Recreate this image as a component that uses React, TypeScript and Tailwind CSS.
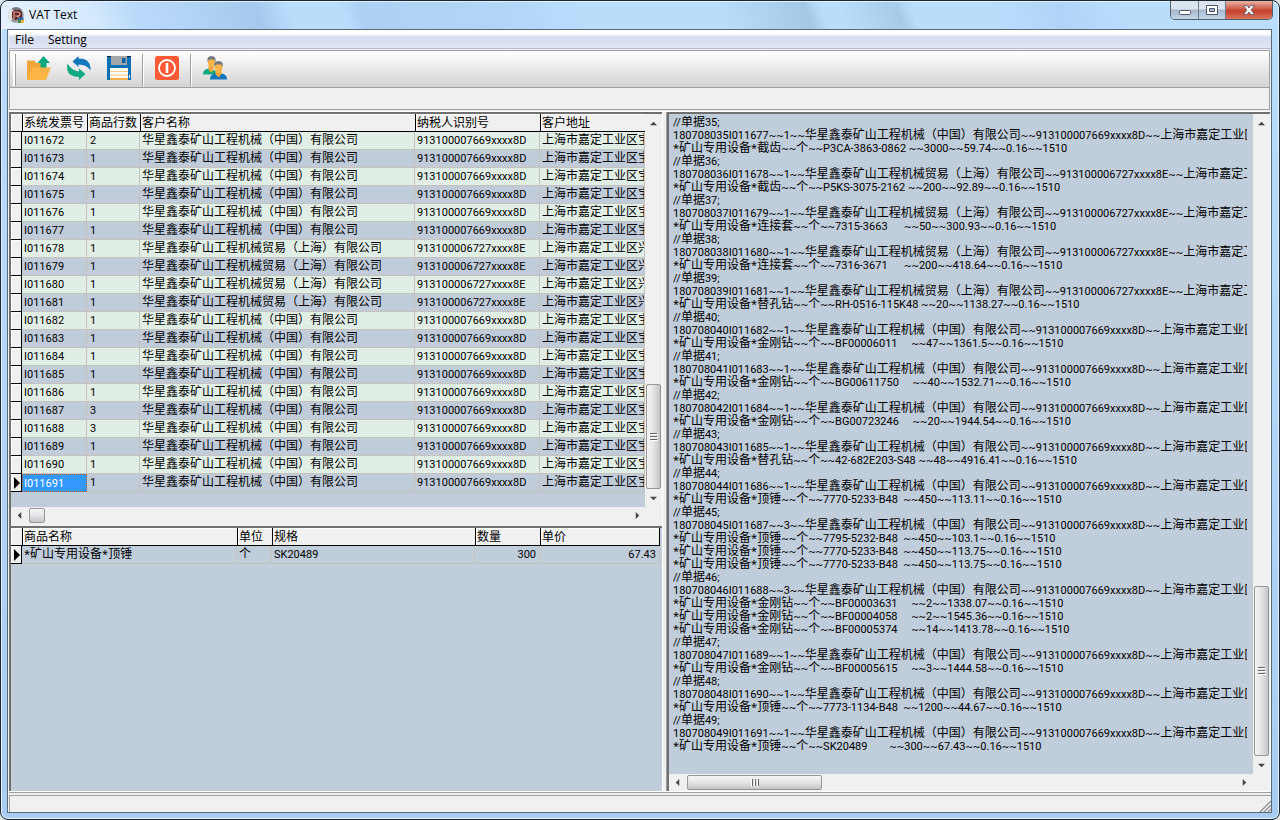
import type { ReactNode } from 'react';

const TOKENS = /([\u2e80-\u9fff\uff00-\uffef\u3000-\u303f]+|\*)/;

function Mixed({ children }: { children: string }) {
  return (
    <>
      {children.split(TOKENS).map((part, i) =>
        i % 2 ? (
          <span key={i} className={part === '*' ? "leading-none font-['Noto_Sans',sans-serif]" : 'text-[12px] leading-none'}>{part}</span>
        ) : (
          part
        ),
      )}
    </>
  );
}

const CN = { name: '华星鑫泰矿山工程机械（中国）有限公司', tax: '913100007669xxxx8D', addr: '上海市嘉定工业区宝' };
const SH = { name: '华星鑫泰矿山工程机械贸易（上海）有限公司', tax: '913100006727xxxx8E', addr: '上海市嘉定工业区兴' };

const invoices = Array.from({ length: 20 }, (_, i) => {
  const no = 11672 + i;
  const lines = no === 11672 ? 2 : no === 11687 || no === 11688 ? 3 : 1;
  return { id: `I0${no}`, lines, customer: no >= 11678 && no <= 11681 ? SH : CN };
});

const items: string[][] = [
  ['截齿~~个~~P3CA-3863-0862 ~~3000~~59.74'],
  ['截齿~~个~~P5KS-3075-2162 ~~200~~92.89'],
  ['连接套~~个~~7315-3663      ~~50~~300.93'],
  ['连接套~~个~~7316-3671      ~~200~~418.64'],
  ['替孔钻~~个~~RH-0516-115K48 ~~20~~1138.27'],
  ['金刚钻~~个~~BF00006011     ~~47~~1361.5'],
  ['金刚钻~~个~~BG00611750     ~~40~~1532.71'],
  ['金刚钻~~个~~BG00723246     ~~20~~1944.54'],
  ['替孔钻~~个~~42-682E203-S48 ~~48~~4916.41'],
  ['顶锤~~个~~7770-5233-B48  ~~450~~113.11'],
  ['顶锤~~个~~7795-5232-B48  ~~450~~103.1', '顶锤~~个~~7770-5233-B48  ~~450~~113.75', '顶锤~~个~~7770-5233-B48  ~~450~~113.75'],
  ['金刚钻~~个~~BF00003631     ~~2~~1338.07', '金刚钻~~个~~BF00004058     ~~2~~1545.36', '金刚钻~~个~~BF00005374     ~~14~~1413.78'],
  ['金刚钻~~个~~BF00005615     ~~3~~1444.58'],
  ['顶锤~~个~~7773-1134-B48  ~~1200~~44.67'],
  ['顶锤~~个~~SK20489        ~~300~~67.43'],
];

const memo = items.flatMap((list, i) => {
  const c = i >= 1 && i <= 4 ? SH : CN;
  return [
    `//单据${35 + i};`,
    `1807080${35 + i}I0${11677 + i}~~${list.length}~~${c.name}~~${c.tax}~~${c.addr}`,
    ...list.map((t) => `*矿山专用设备*${t}~~0.16~~1510`),
  ];
});

function Arrow({ dir }: { dir: 'up' | 'down' | 'left' | 'right' }) {
  const d = { up: 'M0 6L4 2L8 6Z', down: 'M0 2L4 6L8 2Z', left: 'M6 0L2 4L6 8Z', right: 'M2 0L6 4L2 8Z' }[dir];
  const box = dir === 'up' || dir === 'down' ? 'h-[18px] w-4' : 'h-4 w-4';
  return (
    <button type="button" aria-label={`Scroll ${dir}`} className={`flex shrink-0 items-center justify-center ${box}`}>
      <svg viewBox="0 0 8 8" className="size-[7px]"><path d={d} fill="#444" /></svg>
    </button>
  );
}

function Grip({ vertical }: { vertical?: boolean }) {
  return (
    <svg viewBox="0 0 8 8" className={vertical ? 'size-2' : 'size-2 rotate-90'}>
      <path d="M0 .5H7M0 3.5H7M0 6.5H7" stroke="#666" />
      <path d="M1 1.5H8M1 4.5H8M1 7.5H8" stroke="#fff" />
    </svg>
  );
}

const vThumb = 'mx-px flex items-center justify-center rounded-xs border border-[#979797] bg-linear-to-r from-[#f5f5f5] via-[#e4e4e6] to-[#c4c5c9]';
const hThumb = 'my-px flex items-center justify-center rounded-xs border border-[#979797] bg-linear-to-b from-[#f5f5f5] via-[#e4e4e6] to-[#c4c5c9]';

function HeadCell({ children, last }: { children?: ReactNode; last?: boolean }) {
  return (
    <th className={`h-[18px] overflow-hidden border-b border-l border-b-black border-l-black bg-[#f0f0f0] p-0 pl-px text-left text-[12px] font-normal shadow-[inset_1px_1px_0_#fff] ${last ? 'border-r border-r-black' : ''}`}>
      {children}
    </th>
  );
}

function Indicator({ active, head }: { active?: boolean; head?: boolean }) {
  return (
    <td className={`h-[18px] border-b border-black bg-[#f0f0f0] p-0 shadow-[inset_1px_1px_0_#fff] ${head ? '' : 'border-r'}`}>
      {active && (
        <svg viewBox="0 0 10 12" className="block h-3 w-2.5"><path d="M3 0L9 6L3 12Z" fill="#000" /></svg>
      )}
    </td>
  );
}

const cell = 'h-[18px] overflow-hidden border-r border-b border-[#c6c3bf] p-0 pt-px pl-0.5';

function InvoiceGrid() {
  return (
    <table className="w-full table-fixed border-separate border-spacing-0 whitespace-nowrap leading-[16px]">
      <colgroup>
        <col className="w-[11px]" /><col className="w-[65px]" /><col className="w-[53px]" /><col className="w-[275px]" /><col className="w-[125px]" /><col />
      </colgroup>
      <thead>
        <tr>
          <Indicator head />
          <HeadCell>系统发票号</HeadCell><HeadCell>商品行数</HeadCell><HeadCell>客户名称</HeadCell><HeadCell>纳税人识别号</HeadCell><HeadCell>客户地址</HeadCell>
        </tr>
      </thead>
      <tbody>
        {invoices.map((r, i) => {
          const active = i === invoices.length - 1;
          return (
            <tr key={r.id} className={i % 2 ? 'bg-[#c0ccda]' : 'bg-[#e1eee6]'}>
              <Indicator active={active} />
              <td className={active ? 'h-[18px] border border-dotted border-[#b5651d] bg-[#3399ff] p-0 pt-px pl-px leading-[14px] text-white' : cell}>{r.id}</td>
              <td className={`${cell} pl-[3px]`}>{r.lines}</td>
              <td className={cell}><Mixed>{r.customer.name}</Mixed></td>
              <td className={cell}>{r.customer.tax}</td>
              <td className={cell}><Mixed>{r.customer.addr}</Mixed></td>
            </tr>
          );
        })}
      </tbody>
    </table>
  );
}

function ItemGrid() {
  return (
    <table className="table-fixed border-separate border-spacing-0 whitespace-nowrap leading-[16px]">
      <colgroup>
        <col className="w-[11px]" /><col className="w-[215px]" /><col className="w-[35px]" /><col className="w-[203px]" /><col className="w-[65px]" /><col className="w-[120px]" />
      </colgroup>
      <thead>
        <tr>
          <Indicator head />
          <HeadCell>商品名称</HeadCell><HeadCell>单位</HeadCell><HeadCell>规格</HeadCell><HeadCell>数量</HeadCell><HeadCell last>单价</HeadCell>
        </tr>
      </thead>
      <tbody>
        <tr>
          <Indicator active />
          <td className={cell}><Mixed>*矿山专用设备*顶锤</Mixed></td>
          <td className={cell}><Mixed>个</Mixed></td>
          <td className={cell}>SK20489</td>
          <td className={`${cell} pr-[3px] text-right`}>300</td>
          <td className={`${cell} pr-[3px] text-right`}>67.43</td>
        </tr>
      </tbody>
    </table>
  );
}

function AppIcon() {
  return (
    <svg viewBox="0 0 16 16" className="size-4">
      <circle cx="8" cy="8" r="7.800" fill="#9a9c9e" />
      <path d="M.5 10A7.500 7.500 0 0 1 4 1.500L6 4L4 13L2 13Z" fill="#e4e6e4" />
      <path d="M4 1.500A7.500 7.500 0 0 1 14 3L8 3L5 4Z" fill="#77787c" />
      <path d="M4 5L7 3H12L14 5V11L7 13L4 11Z" fill="#5d2430" />
      <path d="M6 12V5H9.500Q12 5 12 7Q12 9 9.500 9H7M9 9L12 12" stroke="#e8a28c" strokeWidth="1.200" fill="none" />
      <path d="M10 10.500h5.500v2.500h-5.500z" fill="#2f66a8" /><path d="M10 13h3v3h-3z" fill="#4c8b43" /><path d="M13 13h3v3h-3z" fill="#e6b93a" />
    </svg>
  );
}

const icons: Record<string, ReactNode> = {
  Open: (
    <>
      <path d="M0 4.500H7.500L9 7H17V24H0Z" fill="#f0a63a" />
      <path d="M16.500 0L23 7H19.500V12H13.500V7H10.500Z" fill="#10a981" />
      <path d="M5 11.500H24L19 24H0Z" fill="#fdb446" />
    </>
  ),
  Refresh: (
    <>
      <path d="M5.500 5.500L11.500 0V2.500Q24 2 23.500 14.500Q20 8.500 11.500 8.500V11Z" fill="#1277bd" />
      <path d="M18.500 18L12 12.500V15.500Q5 15 .5 7.500Q-2 21 12 21V24Z" fill="#10a981" />
    </>
  ),
  Save: (
    <>
      <path d="M0 0H24V24H0Z" fill="#0f71b5" />
      <path d="M4 0H20V9H4Z" fill="#a3a8ad" /><path d="M15 2H18.500V7H15Z" fill="#0f63a5" />
      <path d="M3 12H21V24H3Z" fill="#fffdf6" />
      <path d="M3 15.500H21M3 19H21" stroke="#f0c98c" /><path d="M3 22H21V24H3Z" fill="#f5ae4c" />
      <path d="M0 0H4V1H0ZM20 0H24V1H20Z" fill="#123" /><path d="M22.500 19V22" stroke="#dbeeff" />
    </>
  ),
  Exit: (
    <>
      <rect width="24" height="24" rx="2.500" fill="#fc5a36" />
      <circle cx="12" cy="12" r="8" fill="none" stroke="#fff" strokeWidth="1.800" />
      <path d="M12 7V17" stroke="#fff" strokeWidth="2.600" />
    </>
  ),
  Users: (
    <>
      <path d="M0 18.500Q0 13 6 12.500L13 15V18.500Z" fill="#10a981" />
      <path d="M5.500 9H10.500V14L8 16.500L5.500 14Z" fill="#f0a63a" />
      <ellipse cx="8.500" cy="6" rx="3.700" ry="5" fill="#fbb447" />
      <path d="M4.500 6Q3.500 0 8.500 0Q13.500 0 12.500 6L11 3.500H6.500Z" fill="#737b81" />
      <path d="M7 23.500Q7 18 13 17.500H18Q24 18 24 23.500Z" fill="#1277bd" />
      <path d="M12.500 14H18.500V18L15.500 21.500L12.500 18Z" fill="#f0a63a" />
      <ellipse cx="15.500" cy="11" rx="4" ry="5.500" fill="#fbb447" />
      <path d="M11.500 11Q10 5 15.500 5Q21 5 19.500 11L18 8.500H13Z" fill="#737b81" />
    </>
  ),
};

function Tool({ name }: { name: string }) {
  return (
    <button type="button" aria-label={name} className="flex h-8 w-10 items-center justify-center">
      <svg viewBox="0 0 24 24" className="size-6">{icons[name]}</svg>
    </button>
  );
}

const Divider = () => <div className="mx-[3px] mt-0.5 h-8 w-0.5 border-l border-[#a0a0a0] bg-white" />;

export default function App() {
  return (
    <div className="h-screen bg-[#dfe5ea] font-['Roboto','Noto_Sans_CJK_SC',sans-serif] text-[11px] text-black select-none">
      <div className="flex h-full flex-col rounded-lg border border-[#1c2733] bg-[#b3d4f5] bg-linear-to-b from-[#bbddfc] from-0% to-[#a9ccf2] px-[7px] pb-[6px] pl-[6px] shadow-[inset_0_0_0_1px_#e3f1ff]">
        <header className="-mr-[6px] -ml-[5px] flex h-7 shrink-0 items-start rounded-t-lg bg-[linear-gradient(70deg,#e6f2fd_0px,#d4e9fc_90px,#b9dafa_130px,#b2d4f6_180px,#a5c9ec_245px,#bbddfc_275px,#bbddfc_326px,#add1f3_342px,#b2d5f8_480px,#bbddfc_550px,#bbddfc_680px,#a5c8e6_762px,#bbddfc_776px,#bbddfc_795px,#a8cbe9_848px,#bbddfc_862px,#bbddfc_940px,#b0d3f7_1000px,#bbddfc_1060px,#bbddfc_100%)] pl-1 font-['Open_Sans',sans-serif] shadow-[inset_0_1px_0_#e3f1ff]">
          <div className="flex h-7 flex-1 items-center gap-[5px] pl-0.5">
            <AppIcon />
            <h1 className="text-[12px]">VAT Text</h1>
          </div>
          <div className="mr-[5px] flex h-[19px] overflow-hidden rounded-b-[5px] border border-t-0 border-[#51606f]">
            <button type="button" aria-label="Minimize" className="flex w-7 items-center justify-center border-r border-[#6d7c8c] bg-linear-to-b from-[#dae5f0] from-45% via-[#a6b7ca] via-50% to-[#c3d7eb]">
              <svg viewBox="0 0 12 5" className="mt-1 h-[5px] w-3"><rect x=".5" y=".5" width="11" height="4" rx="1" fill="#fff" stroke="#535666" /></svg>
            </button>
            <button type="button" aria-label="Maximize" className="flex w-[27px] items-center justify-center border-r border-[#6d7c8c] bg-linear-to-b from-[#dae5f0] from-45% via-[#a6b7ca] via-50% to-[#c3d7eb]">
              <svg viewBox="0 0 12 10" className="h-2.5 w-3"><path d="M.5.5H11.500V9.500H.5Z" fill="#fff" stroke="#535666" /><path d="M3.500 3.500H8.500V6.500H3.500Z" fill="#a6b7ca" stroke="#535666" /></svg>
            </button>
            <button type="button" aria-label="Close" className="flex w-[46px] items-center justify-center bg-linear-to-b from-[#e7a99d] from-5% via-[#c43f2b] via-55% to-[#d9755b]">
              <svg viewBox="0 0 12 10" className="h-2.5 w-3"><path d="M.5.5H4L6 3L8 .5H11.500L8 5L11.500 9.500H8L6 7L4 9.500H.5L4 5Z" fill="#fff" stroke="#535666" strokeWidth=".8" /></svg>
            </button>
          </div>
        </header>

        <div className="flex min-h-0 flex-1 flex-col border border-[#596a7b] bg-[#f0f0f0] pl-px">
          <nav className="flex h-[19px] shrink-0 items-center gap-3.5 border-b border-[#b6bccc] bg-linear-to-b from-white from-20% via-[#d5dced] via-40% to-[#e0e6f5] pt-0.5 pl-1.5 font-['Open_Sans',sans-serif] text-[12px]">
            <button type="button">File</button>
            <button type="button">Setting</button>
          </nav>

          <div className="mt-px mr-px shrink-0 border border-[#a0a0a0]">
            <div className="flex h-[37px] items-start border-b border-[#a0a0a0] bg-linear-to-b from-white to-[#d3d3d3] pt-px" role="toolbar" aria-label="Main">
              <div className="mt-0.5 mr-[3px] ml-[3px] h-8 w-[3px] border-r border-[#a0a0a0] bg-white" />
              <Tool name="Open" /><Tool name="Refresh" /><Tool name="Save" />
              <Divider />
              <Tool name="Exit" />
              <Divider />
              <Tool name="Users" />
            </div>
            <div className="h-[21px]" />
          </div>

          <main className="mt-px flex min-h-0 flex-1 border-t border-r border-b border-white">
            <section className="flex w-[653px] shrink-0 flex-col border-l-2 border-[#707070]">
              <div className="flex h-[414px] shrink-0 flex-col border-t-2 border-[#707070] pb-0.5">
                <div className="flex min-h-0 flex-1">
                  <div className="min-w-0 flex-1 overflow-hidden bg-[#c0ccda]"><InvoiceGrid /></div>
                  <div className="flex w-[17px] shrink-0 flex-col">
                    <Arrow dir="up" />
                    <div className="flex-1" />
                    <div className={`${vThumb} h-[105px]`}><Grip vertical /></div>
                    <Arrow dir="down" />
                  </div>
                </div>
                <div className="flex h-[17px] shrink-0 pr-[17px]">
                  <Arrow dir="left" />
                  <div className={`${hThumb} ml-0.5 w-4`} />
                  <div className="flex-1" />
                  <Arrow dir="right" />
                </div>
              </div>
              <div className="min-h-0 flex-1 border-t-2 border-[#707070] bg-[#c0cdda]"><ItemGrid /></div>
            </section>

            <div className="w-[5px] shrink-0 border-r border-l border-white border-r-[#a0a0a0]" />

            <section className="flex min-w-0 flex-1 flex-col border-t-2 border-l-2 border-[#707070]">
              <div className="flex min-h-0 flex-1">
                <div className="min-w-0 flex-1 bg-[#c0cdda] pt-0.5 pr-[6px] pl-1">
                  <div className="h-full overflow-hidden leading-[13px] whitespace-pre" tabIndex={0} aria-label="Generated text">
                    {memo.map((line, i) => (
                      <div key={i} className="h-[13px]"><Mixed>{line}</Mixed></div>
                    ))}
                  </div>
                </div>
                <div className="flex w-[17px] shrink-0 flex-col">
                  <Arrow dir="up" />
                  <div className="flex-1" />
                  <div className={`${vThumb} h-[170px]`}><Grip vertical /></div>
                  <Arrow dir="down" />
                </div>
              </div>
              <div className="flex h-[17px] shrink-0 pr-[18px]">
                <Arrow dir="left" />
                <div className={`${hThumb} ml-0.5 w-[135px]`}><Grip /></div>
                <div className="flex-1" />
                <Arrow dir="right" />
              </div>
            </section>
          </main>

          <footer className="shrink-0 border-t border-[#a0a0a0] pt-0.5">
            <div className="flex h-[17px] items-end justify-end border-t border-l border-[#a0a0a0]">
              <svg viewBox="0 0 12 12" className="size-3"><path d="M1 12L12 1M5 12L12 5M9 12L12 9" stroke="#909090" strokeWidth="1.300" /></svg>
            </div>
          </footer>
        </div>
      </div>
    </div>
  );
}
